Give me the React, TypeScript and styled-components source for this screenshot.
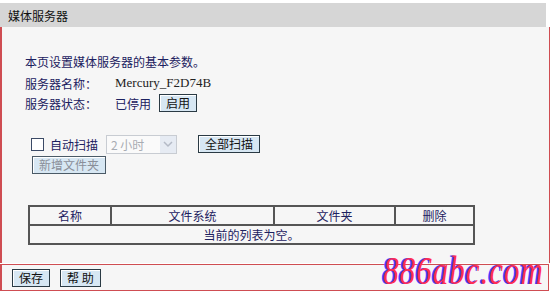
import React from 'react';
import styled, { createGlobalStyle } from 'styled-components';

const GlobalStyle = createGlobalStyle`
  html, body {
    margin: 0;
    padding: 0;
    background: #ffffff;
  }
  body {
    font-family: "Noto Sans CJK SC", "DejaVu Sans", sans-serif;
    font-size: 12px;
  }
`;

const Page = styled.div`
  width: 550px;
  padding-top: 3px;
  position: relative;
  height: 294px;
`;

const TitleBar = styled.div`
  height: 24px;
  width: 546px;
  background: #d6d6d6;
  display: flex;
  align-items: center;
  padding-left: 8px;
  box-sizing: border-box;
  font-size: 12px;
  color: #111;
`;

const Panel = styled.div`
  height: 236px;
  background: #f6f6f6;
  border-left: 2px solid #cf4d52;
  border-right: 1px solid #cf4d52;
  box-sizing: border-box;
  padding: 26px 0 0 23px;
  color: #1c2160;
`;

const Line = styled.div<{ $height?: number }>`
  display: flex;
  align-items: center;
  height: ${(p) => p.$height ?? 20}px;
`;

const FieldLabel = styled.span`
  width: 90px;
`;

const Serif = styled.span`
  font-family: "Liberation Serif", serif;
  font-size: 13px;
  color: #222;
`;

const Button = styled.button<{ $disabled?: boolean }>`
  font-family: "Noto Sans CJK SC", sans-serif;
  font-size: 12px;
  height: 18px;
  padding: 0 6px;
  line-height: 14px;
  background: #d7e7f3;
  border: 1px solid #2a3a44;
  box-shadow: inset 1px 1px 0 #ffffff;
  color: ${(p) => (p.$disabled ? '#8a8f99' : '#111')};
  border-color: ${(p) => (p.$disabled ? '#4a5a66' : '#2a3a44')};
  cursor: pointer;
`;

const Checkbox = styled.span`
  width: 11px;
  height: 11px;
  border: 1px solid #3b4a66;
  background: #fff;
  margin: 0 6px 0 6px;
`;

const Select = styled.div`
  width: 71px;
  height: 19px;
  border: 1px solid #c8ccd2;
  background: #fafafa;
  box-sizing: border-box;
  margin-left: 8px;
  display: flex;
  align-items: center;
  justify-content: space-between;
  color: #a8acb3;
  padding-left: 4px;
`;

const SelectArrow = styled.span`
  width: 16px;
  height: 17px;
  background: #e6ebf3;
  display: flex;
  align-items: center;
  justify-content: center;
`;

const Table = styled.table`
  border-collapse: collapse;
  width: 447px;
  margin-left: 3px;
  margin-top: 29px;
  color: #1c2160;
  font-size: 12px;
  background: #f6f6f6;
  td {
    border: 2px solid #555;
    height: 16px;
    padding: 0;
    text-align: center;
  }
`;

const Footer = styled.div`
  height: 27px;
  width: 549px;
  box-sizing: border-box;
  background: #f6f6f6;
  border-top: 1px solid #cf4d52;
  border-bottom: 1px solid #cf4d52;
  border-left: 2px solid #cf4d52;
  border-right: 1px solid #cf4d52;
  margin-top: 1px;
  display: flex;
  align-items: center;
  gap: 10px;
  padding-left: 10px;
`;

const Watermark = styled.div`
  position: absolute;
  right: 6px;
  bottom: 4px;
  font-family: "Liberation Serif", serif;
  font-style: italic;
  font-size: 31px;
  letter-spacing: 1px;
  color: #ff2d55;
  text-shadow: -2px 0 0 #4a3cff;
  line-height: 1.1;
  transform: scaleY(1.3);
  transform-origin: bottom right;
`;

export default function App() {
  return (
    <Page>
      <GlobalStyle />
      <TitleBar>媒体服务器</TitleBar>
      <Panel>
        <Line $height={16}>本页设置媒体服务器的基本参数。</Line>
        <Line $height={22} style={{ marginTop: 3 }}>
          <FieldLabel>服务器名称：</FieldLabel>
          <Serif>Mercury_F2D74B</Serif>
        </Line>
        <Line $height={18}>
          <FieldLabel>服务器状态：</FieldLabel>
          <span>已停用</span>
          <Button style={{ marginLeft: 8 }}>启用</Button>
        </Line>
        <Line $height={20} style={{ marginTop: 22 }}>
          <Checkbox />
          <span>自动扫描</span>
          <Select>
            <span>2 小时</span>
            <SelectArrow>
              <svg width="10" height="7" viewBox="0 0 10 7">
                <path d="M1 1 L5 5 L9 1" fill="none" stroke="#b4bac6" strokeWidth="1.5" />
              </svg>
            </SelectArrow>
          </Select>
          <Button style={{ marginLeft: 21 }}>全部扫描</Button>
        </Line>
        <Line $height={22}>
          <Button $disabled style={{ marginLeft: 7 }}>新增文件夹</Button>
        </Line>
        <Table>
          <tbody>
            <tr>
              <td style={{ width: 80 }}>名称</td>
              <td style={{ width: 161 }}>文件系统</td>
              <td style={{ width: 119 }}>文件夹</td>
              <td>删除</td>
            </tr>
            <tr>
              <td colSpan={4}>当前的列表为空。</td>
            </tr>
          </tbody>
        </Table>
      </Panel>
      <Footer>
        <Button>保存</Button>
        <Button>帮 助</Button>
      </Footer>
      <Watermark>886abc.com</Watermark>
    </Page>
  );
}
